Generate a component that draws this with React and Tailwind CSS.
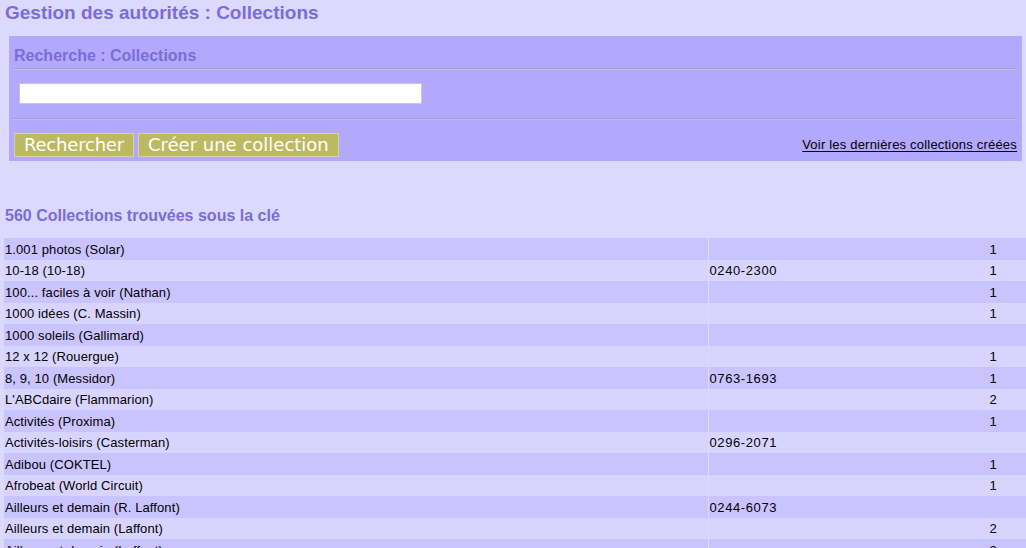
import React from "react";

const rows = [
  ["1.001 photos (Solar)", "", "1"],
  ["10-18 (10-18)", "0240-2300", "1"],
  ["100... faciles à voir (Nathan)", "", "1"],
  ["1000 idées (C. Massin)", "", "1"],
  ["1000 soleils (Gallimard)", "", ""],
  ["12 x 12 (Rouergue)", "", "1"],
  ["8, 9, 10 (Messidor)", "0763-1693", "1"],
  ["L'ABCdaire (Flammarion)", "", "2"],
  ["Activités (Proxima)", "", "1"],
  ["Activités-loisirs (Casterman)", "0296-2071", ""],
  ["Adibou (COKTEL)", "", "1"],
  ["Afrobeat (World Circuit)", "", "1"],
  ["Ailleurs et demain (R. Laffont)", "0244-6073", ""],
  ["Ailleurs et demain (Laffont)", "", "2"],
  ["Ailleurs et demain (Laffont)", "", "2"],
];

export default function App() {
  return (
    <div className="h-[548px] overflow-hidden bg-[#dcd8fe] font-['Liberation_Sans',Arial,sans-serif] text-black">
      <h1 className="pl-[5px] pt-[2px] text-[19px] leading-[22px] font-bold text-[#7b6cd9]">
        Gestion des autorités : Collections
      </h1>

      {/* bloc de recherche */}
      <div className="ml-[9px] mr-[4px] mt-[12px] bg-[#b4a8fc] px-[5px] pt-[11px] pb-[4px]">
        <h2 className="text-[16px] leading-[18px] font-bold text-[#7b6cd9]">Recherche : Collections</h2>
        <div className="mt-[3px] h-[2px] border-t border-b border-t-[#a4a0b8] border-b-[#c4bcfc]" />
        <div className="mt-[13px] pl-[5px]">
          <input
            type="text"
            className="block h-[21px] w-[403px] border border-[#c9c6dc] bg-white outline-none"
          />
        </div>
        <div className="mt-[14px] h-[2px] border-t border-b border-t-[#a4a0b8] border-b-[#c4bcfc]" />
        <div className="mt-[13px] flex items-center justify-between">
          <div className="flex gap-[4px]">
            <button className="h-[24px] border border-[#d6d39c] bg-[#bdb960] px-[9px] font-['DejaVu_Sans',sans-serif] text-[18px] leading-none tracking-[-0.2px] text-white">
              Rechercher
            </button>
            <button className="h-[24px] border border-[#d6d39c] bg-[#bdb960] px-[9px] font-['DejaVu_Sans',sans-serif] text-[18px] leading-none text-white">
              Créer une collection
            </button>
          </div>
          <a href="#" className="text-[13px] leading-[16px] tracking-[0.2px] text-black underline underline-offset-2">
            Voir les dernières collections créées
          </a>
        </div>
      </div>

      <h3 className="mt-[46px] pl-[5px] text-[16px] leading-[18px] font-bold text-[#7b6cd9]">
        560 Collections trouvées sous la clé
      </h3>

      <div className="mt-[13px] pl-[4px]">
        <table className="w-full border-collapse text-[13px]">
          <tbody>
            {rows.map((r, i) => (
              <tr key={i} className={i % 2 === 0 ? "bg-[#cbc3fd]" : "bg-[#d9d4fe]"}>
                <td className="h-[21.5px] w-[704px] px-[1px] pt-[1px] pb-0 align-middle leading-[15px] tracking-[0.1px]">{r[0]}</td>
                <td className="h-[21.5px] border-l border-l-[#dcd8fe] px-[1px] pt-[1px] pb-0 align-middle leading-[15px] tracking-[0.6px]">{r[1]}</td>
                <td className="h-[21.5px] w-[66px] px-[1px] pt-[1px] pb-0 text-center align-middle leading-[15px]">{r[2]}</td>
              </tr>
            ))}
          </tbody>
        </table>
      </div>
    </div>
  );
}
